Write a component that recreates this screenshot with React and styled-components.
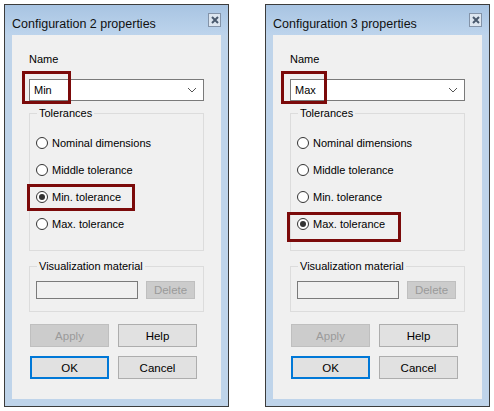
import React from "react"
import styled, { createGlobalStyle } from "styled-components"

const GlobalStyle = createGlobalStyle`
  body {
    margin: 0;
    background: #fff;
    font-family: "Liberation Sans", Arial, sans-serif;
    font-size: 11px;
    color: #000;
  }
`

const Page = styled.div`
  display: flex;
  gap: 36px;
  padding: 4px;
  width: 494px;
  height: 411px;
  box-sizing: border-box;
`

const Window = styled.div`
  width: 225px;
  height: 403px;
  box-sizing: border-box;
  border: 1px solid #3c3c3c;
  background: #bfd4ea;
  display: flex;
  flex-direction: column;
  padding: 0 7px 7px 7px;
`

const TitleBar = styled.div`
  height: 30px;
  box-sizing: border-box;
  margin: 0 -7px;
  padding: 8px 7px 0 7px;
  display: flex;
  align-items: flex-start;
  justify-content: space-between;
  background: linear-gradient(#a8c4e2, #bdd4ec);
  font-size: 12.5px;
  color: #111;
`

const TitleText = styled.span`
  margin-top: 4px;
  line-height: 15px;
`

const CloseButton = styled.div`
  width: 13px;
  height: 14px;
  box-sizing: border-box;
  border: 1px solid #8393a8;
  background: #dde6f0;
  display: flex;
  align-items: center;
  justify-content: center;
`

const Client = styled.div`
  flex: 1;
  background: #f0f0f0;
  padding: 16px 17px 0 17px;
  display: flex;
  flex-direction: column;
`

const Label = styled.div`
  height: 16px;
  line-height: 16px;
  margin-bottom: 12px;
`

const Anchor = styled.div`
  position: relative;
`

const Highlight = styled.div`
  position: absolute;
  box-sizing: border-box;
  border: 3px solid #7b0a0a;
  left: ${p => p.$left}px;
  top: ${p => p.$top}px;
  width: ${p => p.$width}px;
  height: ${p => p.$height}px;
  pointer-events: none;
`

const Combo = styled.div`
  height: 22px;
  box-sizing: border-box;
  border: 1px solid #7a7a7a;
  background: #fff;
  display: flex;
  align-items: center;
  justify-content: space-between;
  padding: 0 6px 0 4px;
`

const Group = styled.fieldset`
  margin: ${p => p.$top}px 0 0 0;
  padding: 0 6px;
  border: 1px solid #dcdcdc;
  height: ${p => p.$height}px;
  box-sizing: border-box;
  min-width: 0;
`

const Legend = styled.legend`
  padding: 0 2px;
  margin-left: 1px;
  line-height: 14px;
`

const RadioList = styled.div`
  display: flex;
  flex-direction: column;
  gap: 11px;
  padding-top: 15px;
`

const RadioRow = styled.div`
  display: flex;
  align-items: center;
  height: 16px;
  gap: 4px;
  position: relative;
`

const RadioCircle = styled.span`
  width: 12px;
  height: 12px;
  box-sizing: border-box;
  border: 1px solid #333;
  border-radius: 50%;
  background: #fff;
  display: flex;
  align-items: center;
  justify-content: center;

  &::after {
    content: "";
    width: 6px;
    height: 6px;
    border-radius: 50%;
    background: ${p => (p.$checked ? "#333" : "transparent")};
  }
`

const MaterialRow = styled.div`
  display: flex;
  gap: 8px;
  align-items: flex-start;
  padding-top: 8px;
`

const TextBox = styled.div`
  width: 102px;
  height: 18px;
  box-sizing: border-box;
  border: 1px solid #7a7a7a;
  background: #f0f0f0;
`

const Button = styled.div`
  height: ${p => p.$h || 23}px;
  width: ${p => p.$w || 79}px;
  box-sizing: border-box;
  display: flex;
  align-items: center;
  justify-content: center;
  font-size: 11.5px;
  border: ${p => (p.$default ? "2px solid #0078d7" : p.$disabled ? "1px solid #bfbfbf" : "1px solid #adadad")};
  background: ${p => (p.$disabled ? "#cccccc" : "#e1e1e1")};
  color: ${p => (p.$disabled ? "#9a9a9a" : "#000")};
`

const ButtonGrid = styled.div`
  display: grid;
  grid-template-columns: 79px 79px;
  column-gap: 9px;
  row-gap: 9px;
  margin: 12px 0 0 1px;
`

const radios = ["Nominal dimensions", "Middle tolerance", "Min. tolerance", "Max. tolerance"]

function Chevron() {
  return (
    <svg width="10" height="6" viewBox="0 0 10 6">
      <path d="M1 1 L5 5 L9 1" fill="none" stroke="#555" strokeWidth="1" />
    </svg>
  )
}

function Dialog({ title, value, selected, comboMark, radioMark }) {
  return (
    <Window>
      <TitleBar>
        <TitleText>{title}</TitleText>
        <CloseButton>
          <svg width="8" height="8" viewBox="0 0 8 8">
            <path d="M1 1 L7 7 M7 1 L1 7" stroke="#4a5a6e" strokeWidth="2" />
          </svg>
        </CloseButton>
      </TitleBar>
      <Client>
        <Label>Name</Label>
        <Anchor>
          <Combo>
            <span>{value}</span>
            <Chevron />
          </Combo>
          <Highlight {...comboMark} />
        </Anchor>
        <Group $top={5} $height={145}>
          <Legend>Tolerances</Legend>
          <RadioList>
            {radios.map((r, i) => (
              <RadioRow key={r}>
                <RadioCircle $checked={i === selected} />
                <span>{r}</span>
                {i === selected && <Highlight {...radioMark} />}
              </RadioRow>
            ))}
          </RadioList>
        </Group>
        <Group $top={8} $height={53}>
          <Legend>Visualization material</Legend>
          <MaterialRow>
            <TextBox />
            <Button $w={49} $h={18} $disabled>Delete</Button>
          </MaterialRow>
        </Group>
        <ButtonGrid>
          <Button $disabled>Apply</Button>
          <Button>Help</Button>
          <Button $default>OK</Button>
          <Button>Cancel</Button>
        </ButtonGrid>
      </Client>
    </Window>
  )
}

export default function App() {
  return (
    <>
      <GlobalStyle />
      <Page>
        <Dialog
          title="Configuration 2 properties"
          value="Min"
          selected={2}
          comboMark={{ $left: -7, $top: -8, $width: 49, $height: 33 }}
          radioMark={{ $left: -9, $top: -5, $width: 108, $height: 27 }}
        />
        <Dialog
          title="Configuration 3 properties"
          value="Max"
          selected={3}
          comboMark={{ $left: -9, $top: -8, $width: 46, $height: 33 }}
          radioMark={{ $left: -10, $top: -4, $width: 114, $height: 30 }}
        />
      </Page>
    </>
  )
}
